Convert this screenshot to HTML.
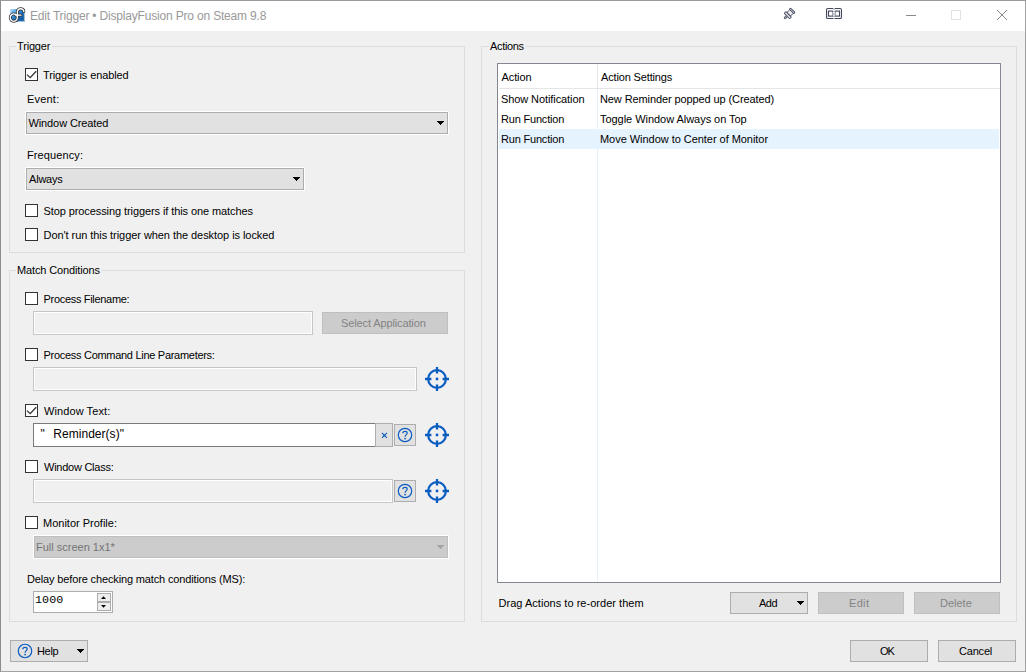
<!DOCTYPE html>
<html><head><meta charset="utf-8"><title>Edit Trigger</title>
<style>
*{box-sizing:border-box;margin:0;padding:0}
html,body{width:1026px;height:672px;overflow:hidden;background:#f0f0f0}
body{position:relative;font-family:"Liberation Sans",sans-serif;font-size:11px;line-height:13px;color:#000}
.a{position:absolute}
.t{position:absolute;white-space:pre;line-height:13px;height:13px}
.g{position:absolute;border:1px solid #dcdcdc}
.gl{position:absolute;background:#f0f0f0;height:13px;white-space:pre}
.cb{position:absolute;width:13px;height:13px;border:1px solid #333;background:#fff}
.dd{position:absolute;height:22px;border:1px solid #adadad;background:#e1e1e1;box-shadow:0 0 0 1px #fff;border-radius:.5px}
.btn{position:absolute;border:1px solid #adadad;background:#e1e1e1}
.dis{position:absolute;border:1px solid #bfbfbf;background:#ccc;color:#838383}
.di{position:absolute;height:24px;border:1px solid #c6c6c6;background:#f0f0f0;box-shadow:inset 0 0 0 1px #fff}
.arr{position:absolute;width:0;height:0;border-left:4px solid transparent;border-right:4px solid transparent;border-top:4px solid #000}
svg{position:absolute;overflow:visible}
</style></head><body>
<!-- window frame -->
<div class="a" style="left:0;top:0;width:1026px;height:672px;border:1px solid #a2a2a2;border-left-color:#8c8c8c;border-top-color:#9a9a9a;z-index:50;pointer-events:none"></div>
<!-- title bar -->
<div class="a" id="titlebar" style="left:1px;top:1px;width:1024px;height:30px;background:#fff"></div>
<div class="t" id="title" style="letter-spacing:-0.18px;left:30px;top:8px;font-size:12px;line-height:16px;height:16px;color:#999">Edit Trigger • DisplayFusion Pro on Steam 9.8</div>

<!-- Trigger group -->
<div class="g" style="left:9px;top:46px;width:456px;height:207px"></div>
<div class="gl t" style="letter-spacing:-0.17px;left:16px;top:40px;padding:0 2px 0 1px">Trigger</div>
<div class="cb" style="left:25px;top:68px"></div>
<div class="t" style="letter-spacing:-0.12px;left:43px;top:69px">Trigger is enabled</div>
<div class="t" style="letter-spacing:0.2px;left:27px;top:93px">Event:</div>
<div class="dd" style="left:26px;top:112px;width:422px"></div>
<div class="t" style="letter-spacing:-0.11px;left:28.5px;top:117px">Window Created</div>
<svg style="left:437px;top:121px" width="7" height="4" shape-rendering="crispEdges"><path d="M0 0h7v1h-1v1h-1v1h-1v1h-1v-1h-1v-1h-1v-1h-1z" fill="#000"/></svg>
<div class="t" style="letter-spacing:0.11px;left:27px;top:149px">Frequency:</div>
<div class="dd" style="left:26px;top:168px;width:278px"></div>
<div class="t" style="letter-spacing:-0.2px;left:29px;top:173px">Always</div>
<svg style="left:293px;top:177px" width="7" height="4" shape-rendering="crispEdges"><path d="M0 0h7v1h-1v1h-1v1h-1v1h-1v-1h-1v-1h-1v-1h-1z" fill="#000"/></svg>
<div class="cb" style="left:25px;top:204px"></div>
<div class="t" style="letter-spacing:-0.09px;left:43.5px;top:205px">Stop processing triggers if this one matches</div>
<div class="cb" style="left:25px;top:228px"></div>
<div class="t" style="letter-spacing:-0.06px;left:43.5px;top:229px">Don't run this trigger when the desktop is locked</div>

<!-- Match Conditions group -->
<div class="g" style="left:9px;top:270px;width:456px;height:352px"></div>
<div class="gl t" style="letter-spacing:-0.13px;left:16px;top:264px;padding:0 2px 0 1px">Match Conditions</div>
<div class="cb" style="left:25px;top:292px"></div>
<div class="t" style="letter-spacing:-0.31px;left:43.5px;top:293px">Process Filename:</div>
<div class="di" style="left:33px;top:311px;width:280px"></div>
<div class="dis" style="left:322px;top:312px;width:126px;height:22px"></div>
<div class="t" style="letter-spacing:-0.12px;left:341px;top:317px;color:#838383">Select Application</div>

<div class="cb" style="left:25px;top:348px"></div>
<div class="t" style="letter-spacing:-0.29px;left:43.5px;top:349px">Process Command Line Parameters:</div>
<div class="di" style="left:33px;top:367px;width:384px"></div>

<div class="cb" style="left:25px;top:404px"></div>
<div class="t" style="letter-spacing:0.09px;left:44px;top:405px">Window Text:</div>
<div class="a" style="left:33px;top:423px;width:343px;height:24px;border:1px solid #7a7a7a;background:#fff"></div>
<div class="t" id="wt" style="letter-spacing:0.03px;word-spacing:0.9px;left:40.5px;top:426px;font-size:12px;line-height:16px;height:16px">"  Reminder(s)"</div>
<div class="btn" style="left:375px;top:423px;width:18px;height:24px"></div>
<div class="btn" style="left:394px;top:424px;width:22px;height:22px"></div>

<div class="cb" style="left:25px;top:460px"></div>
<div class="t" style="letter-spacing:-0.25px;left:44px;top:461px">Window Class:</div>
<div class="di" style="left:33px;top:479px;width:360px"></div>
<div class="btn" style="left:394px;top:480px;width:22px;height:22px"></div>

<div class="cb" style="left:25px;top:516px"></div>
<div class="t" style="letter-spacing:0px;left:43px;top:517px">Monitor Profile:</div>
<div class="dis" style="left:34px;top:536px;width:414px;height:22px;box-shadow:0 0 0 1px #fff"></div>
<div class="t" style="letter-spacing:0px;left:36px;top:541px;color:#747474">Full screen 1x1*</div>
<svg style="left:437px;top:545px" width="7" height="4" shape-rendering="crispEdges"><path d="M0 0h7v1h-1v1h-1v1h-1v1h-1v-1h-1v-1h-1v-1h-1z" fill="#a3a3a3"/></svg>

<div class="t" style="letter-spacing:-0.14px;left:27px;top:573px">Delay before checking match conditions (MS):</div>
<div class="a" style="left:33px;top:591px;width:80px;height:22px;border:1px solid #abadb3;background:#fff"></div>
<div class="t" id="num" style="letter-spacing:0.1px;left:35px;top:594px;font-family:'Liberation Mono',monospace;font-size:11.7px">1000</div>
<div class="btn" style="left:97px;top:593px;width:14px;height:9px;background:#eee"></div>
<div class="btn" style="left:97px;top:602px;width:14px;height:9px;background:#eee"></div>

<!-- Actions group -->
<div class="g" style="left:481px;top:46px;width:536px;height:576px"></div>
<div class="gl t" style="letter-spacing:-0.33px;left:489px;top:40px;padding:0 2px 0 1px">Actions</div>
<div class="a" id="list" style="left:497px;top:63px;width:504px;height:520px;border:1px solid #828790;background:#fff"></div>
<div class="a" style="left:499px;top:88px;width:501px;height:1px;background:#e5e5e5"></div>
<div class="a" style="left:597px;top:64px;width:1px;height:25px;background:#e5e5e5"></div>
<div class="a" style="left:597px;top:89px;width:1px;height:493px;background:#e6f0fb"></div>
<div class="a" style="left:499px;top:129px;width:500px;height:20px;background:#e5f3ff"></div>
<div class="t" style="letter-spacing:-0.1px;left:501.5px;top:71px">Action</div>
<div class="t" style="letter-spacing:-0.15px;left:601px;top:71px">Action Settings</div>
<div class="t" style="letter-spacing:-0.09px;left:501px;top:93px">Show Notification</div>
<div class="t" style="letter-spacing:-0.1px;left:600px;top:93px">New Reminder popped up (Created)</div>
<div class="t" style="letter-spacing:-0.19px;left:501px;top:113px">Run Function</div>
<div class="t" style="letter-spacing:-0.04px;left:600px;top:113px">Toggle Window Always on Top</div>
<div class="t" style="letter-spacing:-0.19px;left:501px;top:133px">Run Function</div>
<div class="t" style="letter-spacing:-0.04px;left:600px;top:133px">Move Window to Center of Monitor</div>

<div class="t" style="letter-spacing:0.03px;left:498.5px;top:597px">Drag Actions to re-order them</div>
<div class="btn" style="left:730px;top:592px;width:78px;height:22px"></div>
<div class="t" style="letter-spacing:-0.5px;left:759px;top:597px">Add</div>
<svg style="left:797px;top:601px" width="7" height="4" shape-rendering="crispEdges"><path d="M0 0h7v1h-1v1h-1v1h-1v1h-1v-1h-1v-1h-1v-1h-1z" fill="#000"/></svg>
<div class="dis" style="left:818px;top:592px;width:86px;height:22px"></div>
<div class="t" style="letter-spacing:0.33px;left:849px;top:597px;color:#838383">Edit</div>
<div class="dis" style="left:914px;top:592px;width:86px;height:22px"></div>
<div class="t" style="letter-spacing:0px;left:940px;top:597px;color:#838383">Delete</div>

<!-- bottom buttons -->
<div class="btn" style="left:10px;top:640px;width:78px;height:22px"></div>
<div class="t" style="letter-spacing:-0.34px;left:37px;top:645px">Help</div>
<svg style="left:77px;top:649px" width="7" height="4" shape-rendering="crispEdges"><path d="M0 0h7v1h-1v1h-1v1h-1v1h-1v-1h-1v-1h-1v-1h-1z" fill="#000"/></svg>
<div class="btn" style="left:850px;top:640px;width:78px;height:22px"></div>
<div class="t" style="letter-spacing:-1px;left:880px;top:645px">OK</div>
<div class="btn" style="left:938px;top:640px;width:78px;height:22px"></div>
<div class="t" style="letter-spacing:-0.2px;left:959px;top:645px">Cancel</div>

<!-- icons -->
<svg style="left:424px;top:366px" width="26" height="26" viewBox="-13 -13 26 26"><g fill="none" stroke="#0a5cc0" stroke-width="2.2"><circle r="8.85"/><path d="M0-12V-5.6M0 12V5.6M-12 0H-5.6M12 0H5.6" stroke-width="2.3"/></g><circle r="1.4" fill="#0a5cc0"/></svg>
<svg style="left:424px;top:422px" width="26" height="26" viewBox="-13 -13 26 26"><g fill="none" stroke="#0a5cc0" stroke-width="2.2"><circle r="8.85"/><path d="M0-12V-5.6M0 12V5.6M-12 0H-5.6M12 0H5.6" stroke-width="2.3"/></g><circle r="1.4" fill="#0a5cc0"/></svg>
<svg style="left:424px;top:478px" width="26" height="26" viewBox="-13 -13 26 26"><g fill="none" stroke="#0a5cc0" stroke-width="2.2"><circle r="8.85"/><path d="M0-12V-5.6M0 12V5.6M-12 0H-5.6M12 0H5.6" stroke-width="2.3"/></g><circle r="1.4" fill="#0a5cc0"/></svg>
<svg style="left:396px;top:426px" width="18" height="18" viewBox="-9 -9 18 18"><circle r="6.7" fill="none" stroke="#0a5cc0" stroke-width="1.2"/><path d="M-2.2-1.7C-2.2-3-1.3-3.65 0-3.65 1.3-3.65 2.2-3 2.2-1.9 2.2-.4 .1-.2 .1 1.7" fill="none" stroke="#0a5cc0" stroke-width="1.2"/><circle cx=".1" cy="3.6" r=".85" fill="#0a5cc0"/></svg>
<svg style="left:396px;top:482px" width="18" height="18" viewBox="-9 -9 18 18"><circle r="6.7" fill="none" stroke="#0a5cc0" stroke-width="1.2"/><path d="M-2.2-1.7C-2.2-3-1.3-3.65 0-3.65 1.3-3.65 2.2-3 2.2-1.9 2.2-.4 .1-.2 .1 1.7" fill="none" stroke="#0a5cc0" stroke-width="1.2"/><circle cx=".1" cy="3.6" r=".85" fill="#0a5cc0"/></svg>
<svg style="left:15.9px;top:642.4px" width="18" height="18" viewBox="-9 -9 18 18"><circle r="6.75" fill="none" stroke="#0a5cc0" stroke-width="1.2"/><path d="M-2.2-1.7C-2.2-3-1.3-3.65 0-3.65 1.3-3.65 2.2-3 2.2-1.9 2.2-.4 .1-.2 .1 1.7" fill="none" stroke="#0a5cc0" stroke-width="1.2"/><circle cx=".1" cy="3.6" r=".85" fill="#0a5cc0"/></svg>
<svg style="left:25px;top:68px" width="13" height="13" viewBox="0 0 13 13"><path d="M2 6.6L5.2 9.6 11.2 3.2" fill="none" stroke="#333" stroke-width="1.3"/></svg>
<svg style="left:25px;top:404px" width="13" height="13" viewBox="0 0 13 13"><path d="M2 6.6L5.2 9.6 11.2 3.2" fill="none" stroke="#333" stroke-width="1.3"/></svg>
<svg style="left:380.6px;top:432px" width="7" height="7" viewBox="0 0 7 7"><path d="M.9.9L5.9 5.9M5.9 .9L.9 5.9" stroke="#0a5cc0" stroke-width="1.1" fill="none"/><rect x="2.6" y="2.6" width="1.6" height="1.6" fill="#0a5cc0"/></svg>
<svg style="left:101px;top:596px" width="5" height="3" viewBox="0 0 5 3"><path d="M0 3L2.5 .2 5 3z" fill="#000"/></svg>
<svg style="left:101px;top:605px" width="5" height="3" viewBox="0 0 5 3"><path d="M0 0L2.5 2.8 5 0z" fill="#000"/></svg>
<svg style="left:906px;top:15px" width="10" height="1"><rect width="10" height="1" fill="#8a8a8a"/></svg>
<svg style="left:951px;top:10px" width="10" height="10"><rect x=".5" y=".5" width="9" height="9" fill="none" stroke="#e2e2e2"/></svg>
<svg style="left:997px;top:10px" width="10" height="10"><path d="M0 0L10 10M10 0L0 10" stroke="#888" stroke-width="1" fill="none"/></svg>
<svg style="left:783px;top:7px" width="13" height="13" viewBox="0 0 13 13"><g transform="translate(5.5,7.5) rotate(45)" fill="#e9e9ec" stroke="#4d5266" stroke-width="1" stroke-linejoin="round"><rect x="-3.2" y="-6" width="6.4" height="1.7" rx=".8"/><rect x="-2.5" y="-4.3" width="5" height="4.1" stroke-width=".9"/><rect x="-3.9" y="-.2" width="7.8" height="2.4" rx=".8"/><rect x="-.75" y="2.2" width="1.5" height="3.4" rx=".7"/></g></svg>
<svg style="left:826px;top:8px" width="16" height="11" viewBox="0 0 16 11"><g fill="none" stroke="#43485c" stroke-width="1.1"><rect x=".55" y=".55" width="14.9" height="9.9" rx="1.3"/><rect x="2.5" y="3.1" width="4.6" height="5"/><rect x="8.9" y="3.1" width="4.6" height="5"/></g><rect x="7.1" y="0" width="1.8" height="11" fill="#fff"/><path d="M8 .5V11" stroke="#9a9ca8" stroke-width="1.6" stroke-dasharray="1.2 1.2"/><path d="M6.2.55H7.1M8.9.55H9.8M6.2 10.45H7.1M8.9 10.45H9.8" stroke="#43485c" stroke-width="1.1"/></svg>
<svg style="left:8px;top:6px" width="18" height="18" viewBox="8 6 18 18"><defs><linearGradient id="bg" x1="0" y1="0" x2="1" y2="1"><stop offset="0" stop-color="#b9ddf6"/><stop offset=".3" stop-color="#4a9fe0"/><stop offset=".6" stop-color="#1468b6"/><stop offset="1" stop-color="#0c5199"/></linearGradient></defs><rect x="10.3" y="9" width="14.5" height="12.8" fill="url(#bg)"/><path d="M24.4 9.5V21.4H18" fill="none" stroke="#c3d3df" stroke-width=".9"/><g fill="none" stroke-linecap="round"><path d="M17.4 17.6A3.6 3.7 0 1 1 17.4 17.5V11.4A3.3 3.3 0 0 1 23.9 11.6M15.6 15.2H21" stroke="#333" stroke-width="2.8"/><path d="M17.4 17.6A3.6 3.7 0 1 1 17.4 17.5V11.4A3.3 3.3 0 0 1 23.9 11.6M15.6 15.2H21" stroke="#fff" stroke-width="1.3"/></g></svg>
</body></html>
